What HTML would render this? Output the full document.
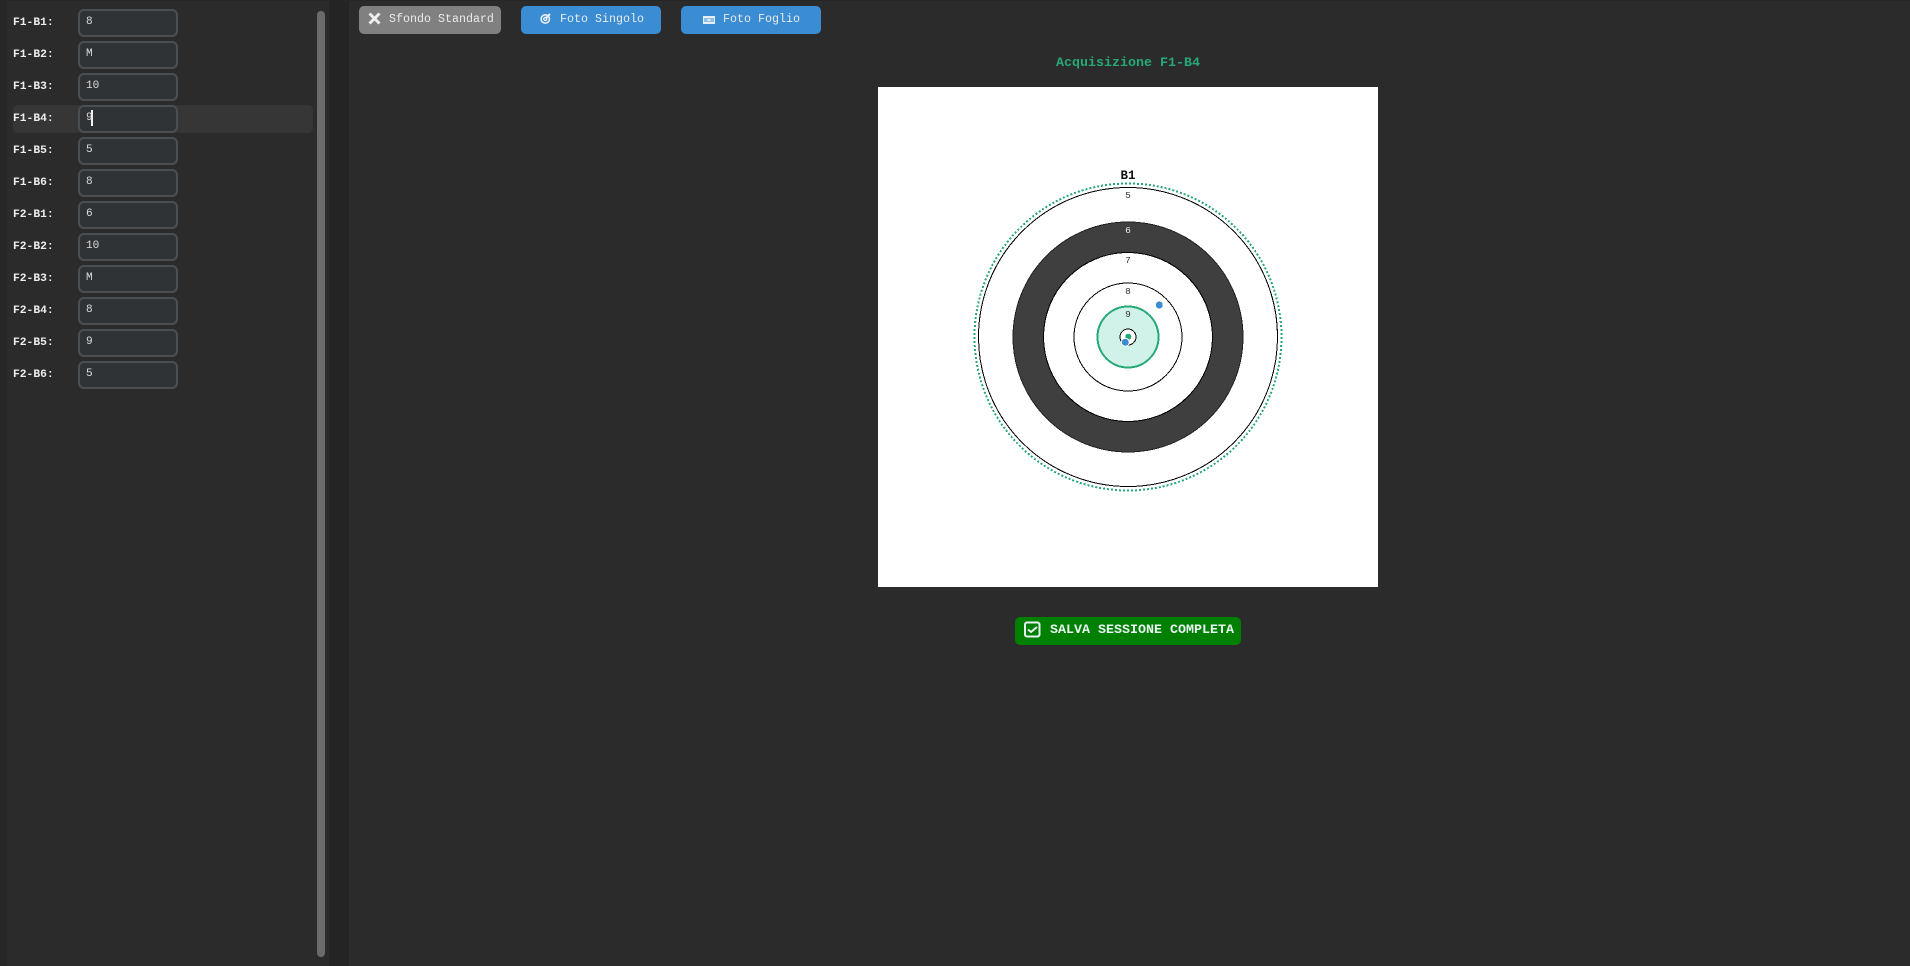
<!DOCTYPE html>
<html><head><meta charset="utf-8"><style>
html,body{margin:0;padding:0;width:1910px;height:966px;overflow:hidden;background:#2b2b2b;font-family:"Liberation Mono",monospace}
div{position:absolute;box-sizing:border-box}
.p{left:7px;top:0;width:322px;height:966px;background:#2b2b2b;border-radius:6px}
.l{left:13px;width:60px;font:bold 11.3px/14px "Liberation Mono",monospace;color:#eee;white-space:pre}
.i{left:78px;width:100px;height:28px;border:2px solid #4b4f51;border-radius:6px;background:#303336;color:#ddd;font:11.1px/13px "Liberation Mono",monospace;padding:5px 0 0 6px}
.b{top:6px;height:28px;border-radius:5px;color:#eaeaea;font:11.67px/14px "Liberation Mono",monospace;white-space:pre}
.b span,.b svg{position:absolute}
</style></head><body>
<div style="left:0;top:0;width:7px;height:966px;background:#262626"></div>
<div class="p"></div>
<div style="left:329px;top:0;width:20px;height:966px;background:#242424"></div>
<div style="left:0;top:0;width:1910px;height:1px;background:#262626"></div>
<div style="left:13px;top:105px;width:300px;height:28px;background:#363636;border-radius:5px"></div>
<div style="left:317px;top:11px;width:8px;height:946px;background:#6b6b6b;border-radius:4px"></div>

<div class="l" style="top:16px">F1-B1:</div><div class="i" style="top:9px">8</div>
<div class="l" style="top:48px">F1-B2:</div><div class="i" style="top:41px">M</div>
<div class="l" style="top:80px">F1-B3:</div><div class="i" style="top:73px">10</div>
<div class="l" style="top:112px">F1-B4:</div><div class="i" style="top:105px">9</div>
<div style="left:91px;top:110px;width:2px;height:16px;background:#f2f2f2"></div>
<div class="l" style="top:144px">F1-B5:</div><div class="i" style="top:137px">5</div>
<div class="l" style="top:176px">F1-B6:</div><div class="i" style="top:169px">8</div>
<div class="l" style="top:208px">F2-B1:</div><div class="i" style="top:201px">6</div>
<div class="l" style="top:240px">F2-B2:</div><div class="i" style="top:233px">10</div>
<div class="l" style="top:272px">F2-B3:</div><div class="i" style="top:265px">M</div>
<div class="l" style="top:304px">F2-B4:</div><div class="i" style="top:297px">8</div>
<div class="l" style="top:336px">F2-B5:</div><div class="i" style="top:329px">9</div>
<div class="l" style="top:368px">F2-B6:</div><div class="i" style="top:361px">5</div>

<div class="b" style="left:359px;width:142px;background:#808080">
<svg style="left:9px;top:6px" width="13" height="13" viewBox="0 0 13 13"><path d="M1.5 1.5L11.5 11.5M11.5 1.5L1.5 11.5" stroke="#eee" stroke-width="3" fill="none"/></svg>
<span style="left:30px;top:6px">Sfondo Standard</span></div>
<div class="b" style="left:521px;width:140px;background:#3a8dd2">
<svg style="left:19px;top:7px" width="12" height="11" viewBox="0 0 12 11" fill="none" stroke="#e8eef5"><circle cx="5.3" cy="6" r="4.2" stroke-width="1.6"/><circle cx="5.3" cy="6" r="1.5" stroke-width="1.4"/><path d="M6 5L10 1" stroke-width="2"/></svg>
<span style="left:39px;top:6px">Foto Singolo</span></div>
<div class="b" style="left:681px;width:140px;background:#3a8dd2">
<svg style="left:22px;top:10px" width="12" height="8" viewBox="0 0 12 8"><rect width="12" height="8" fill="#e8eef5"/><rect x="1" y="2" width="10" height="4" fill="#8dbce4"/><rect x="4.5" y="3" width="3" height="2" fill="#e8eef5"/></svg>
<span style="left:42px;top:6px">Foto Foglio</span></div>

<div style="left:1055px;top:56px;width:146px;font:bold 13.33px/16px 'Liberation Mono',monospace;color:#27a977;white-space:pre;text-align:center">Acquisizione F1-B4</div>

<div style="left:878px;top:87px;width:500px;height:500px;background:#fff"></div>
<svg style="position:absolute;left:878px;top:87px" width="500" height="500" viewBox="878 87 500 500" shape-rendering="crispEdges">
<circle cx="1128" cy="337" r="153.5" fill="none" stroke="#27a977" stroke-width="2" stroke-dasharray="2 2"/>
<circle cx="1128" cy="337" r="149.5" fill="#fff" stroke="#000" stroke-width="1"/>
<circle cx="1128" cy="337" r="115" fill="#3f3f3f" stroke="#222" stroke-width="1"/>
<circle cx="1128" cy="337" r="84.5" fill="#fff" stroke="#000" stroke-width="1"/>
<circle cx="1128" cy="337" r="54" fill="#fff" stroke="#000" stroke-width="1"/>
<circle cx="1128" cy="337" r="30.5" fill="#d1f2e8" stroke="#27a977" stroke-width="2"/>
<circle cx="1128" cy="337" r="8" fill="#fff" stroke="#000" stroke-width="1"/>
<circle cx="1128.3" cy="336.7" r="3" fill="#27a977"/>
<circle cx="1125.3" cy="342.3" r="4.5" fill="#fff"/>
<circle cx="1125.3" cy="342.3" r="3.5" fill="#3a8dd2"/>
<circle cx="1159.3" cy="305" r="3.5" fill="#3a8dd2"/>
<g font-family="Liberation Mono" font-size="9.5" text-anchor="middle" fill="#333">
<text x="1128" y="198">5</text><text x="1128" y="233" fill="#eee">6</text><text x="1128" y="263">7</text><text x="1128" y="294">8</text><text x="1128" y="317">9</text>
</g>
<text x="1128" y="179" font-family="Liberation Mono" font-size="12.5" font-weight="bold" text-anchor="middle" fill="#111">B1</text>
</svg>

<div style="left:1015px;top:617px;width:226px;height:28px;background:#008000;border-radius:5px"></div>
<svg style="position:absolute;left:1024px;top:621px" width="17" height="17" viewBox="0 0 17 17" fill="none" stroke="#e6f2f2" stroke-width="2"><rect x="1" y="1.5" width="14.5" height="14" rx="2"/><path d="M4 8.5L7 11L13 6"/></svg>
<div style="left:1050px;top:623px;width:190px;font:bold 13.33px/16px 'Liberation Mono',monospace;color:#eaf5f5;white-space:pre">SALVA SESSIONE COMPLETA</div>
</body></html>
